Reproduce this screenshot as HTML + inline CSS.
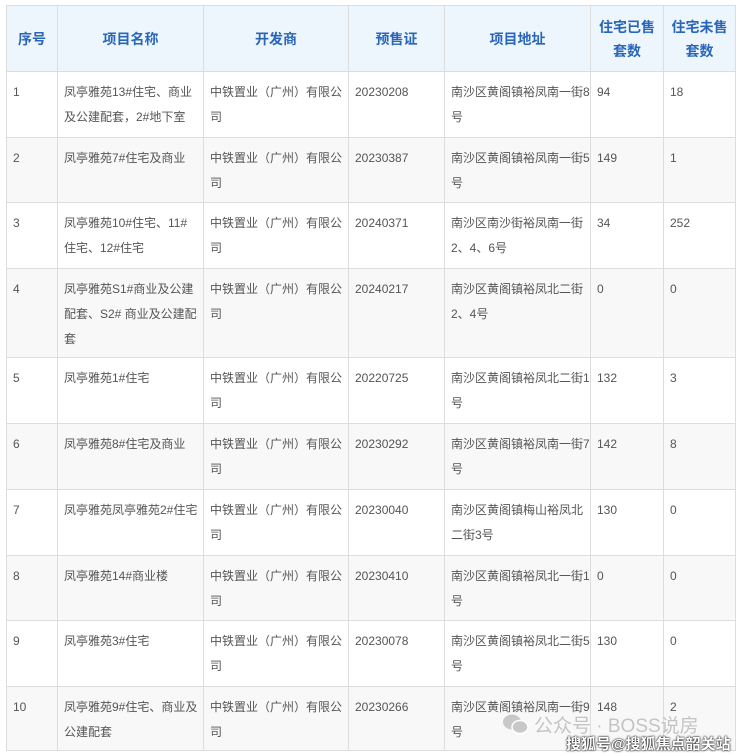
<!DOCTYPE html>
<html><head><meta charset="utf-8">
<style>
html,body{margin:0;padding:0;background:#fff;width:740px;height:756px;overflow:hidden;position:relative}
table{position:absolute;left:6px;top:5px;border-collapse:collapse;table-layout:fixed;font-family:"Liberation Sans","Noto Sans CJK SC",sans-serif;font-size:12px;color:#555}
td,th{border:1px solid #ddd;vertical-align:top;padding:8px 0 0 6px;line-height:25px;overflow:hidden;word-break:break-all}
th{background:#edf5fd;color:#2a66b8;font-weight:bold;font-size:14px;vertical-align:middle;text-align:center;padding:0 4px;line-height:24px}
tr.g td{background:#f8f8f8}
.wm{position:absolute;font-family:"Liberation Sans","Noto Sans CJK SC",sans-serif}
</style></head><body>
<table>
<colgroup><col style="width:51px"><col style="width:146px"><col style="width:145px"><col style="width:96px"><col style="width:146px"><col style="width:73px"><col style="width:72px"></colgroup>
<tr style="height:66px"><th>序号</th><th>项目名称</th><th>开发商</th><th>预售证</th><th>项目地址</th><th>住宅已售套数</th><th>住宅未售套数</th></tr>
<tr style="height:66px"><td>1</td><td>凤亭雅苑13#住宅、商业及公建配套，2#地下室</td><td>中铁置业（广州）有限公司</td><td>20230208</td><td>南沙区黄阁镇裕凤南一街8号</td><td>94</td><td>18</td></tr>
<tr class="g" style="height:65px"><td>2</td><td>凤亭雅苑7#住宅及商业</td><td>中铁置业（广州）有限公司</td><td>20230387</td><td>南沙区黄阁镇裕凤南一街5号</td><td>149</td><td>1</td></tr>
<tr style="height:66px"><td>3</td><td>凤亭雅苑10#住宅、11#<br>住宅、12#住宅</td><td>中铁置业（广州）有限公司</td><td>20240371</td><td>南沙区南沙街裕凤南一街2、4、6号</td><td>34</td><td>252</td></tr>
<tr class="g" style="height:89px"><td>4</td><td>凤亭雅苑S1#商业及公建配套、S2# 商业及公建配套</td><td>中铁置业（广州）有限公司</td><td>20240217</td><td>南沙区黄阁镇裕凤北二街2、4号</td><td>0</td><td>0</td></tr>
<tr style="height:66px"><td>5</td><td>凤亭雅苑1#住宅</td><td>中铁置业（广州）有限公司</td><td>20220725</td><td>南沙区黄阁镇裕凤北二街1号</td><td>132</td><td>3</td></tr>
<tr class="g" style="height:66px"><td>6</td><td>凤亭雅苑8#住宅及商业</td><td>中铁置业（广州）有限公司</td><td>20230292</td><td>南沙区黄阁镇裕凤南一街7号</td><td>142</td><td>8</td></tr>
<tr style="height:66px"><td>7</td><td>凤亭雅苑凤亭雅苑2#住宅</td><td>中铁置业（广州）有限公司</td><td>20230040</td><td>南沙区黄阁镇梅山裕凤北二街3号</td><td>130</td><td>0</td></tr>
<tr class="g" style="height:65px"><td>8</td><td>凤亭雅苑14#商业楼</td><td>中铁置业（广州）有限公司</td><td>20230410</td><td>南沙区黄阁镇裕凤北一街1号</td><td>0</td><td>0</td></tr>
<tr style="height:66px"><td>9</td><td>凤亭雅苑3#住宅</td><td>中铁置业（广州）有限公司</td><td>20230078</td><td>南沙区黄阁镇裕凤北二街5号</td><td>130</td><td>0</td></tr>
<tr class="g" style="height:64px"><td>10</td><td>凤亭雅苑9#住宅、商业及公建配套</td><td>中铁置业（广州）有限公司</td><td>20230266</td><td>南沙区黄阁镇裕凤南一街9号</td><td>148</td><td>2</td></tr>
</table>
<svg class="wm" style="left:502px;top:713px" width="28" height="22" viewBox="0 0 28 22"><ellipse cx="10" cy="9" rx="9" ry="7.5" fill="#c8c8c8"/><ellipse cx="18" cy="14" rx="8" ry="6.5" fill="#c8c8c8" stroke="#fff" stroke-width="1.5"/></svg>
<div class="wm" style="left:534px;top:711px;font-size:19px;color:#c4c4c4">公众号 · BOSS说房</div>
<div class="wm" style="left:566px;top:733px;font-size:15px;color:#fff;font-weight:bold;text-shadow:0 0 2px #000,0 0 1px #000">搜狐号@搜狐焦点韶关站</div>
</body></html>
